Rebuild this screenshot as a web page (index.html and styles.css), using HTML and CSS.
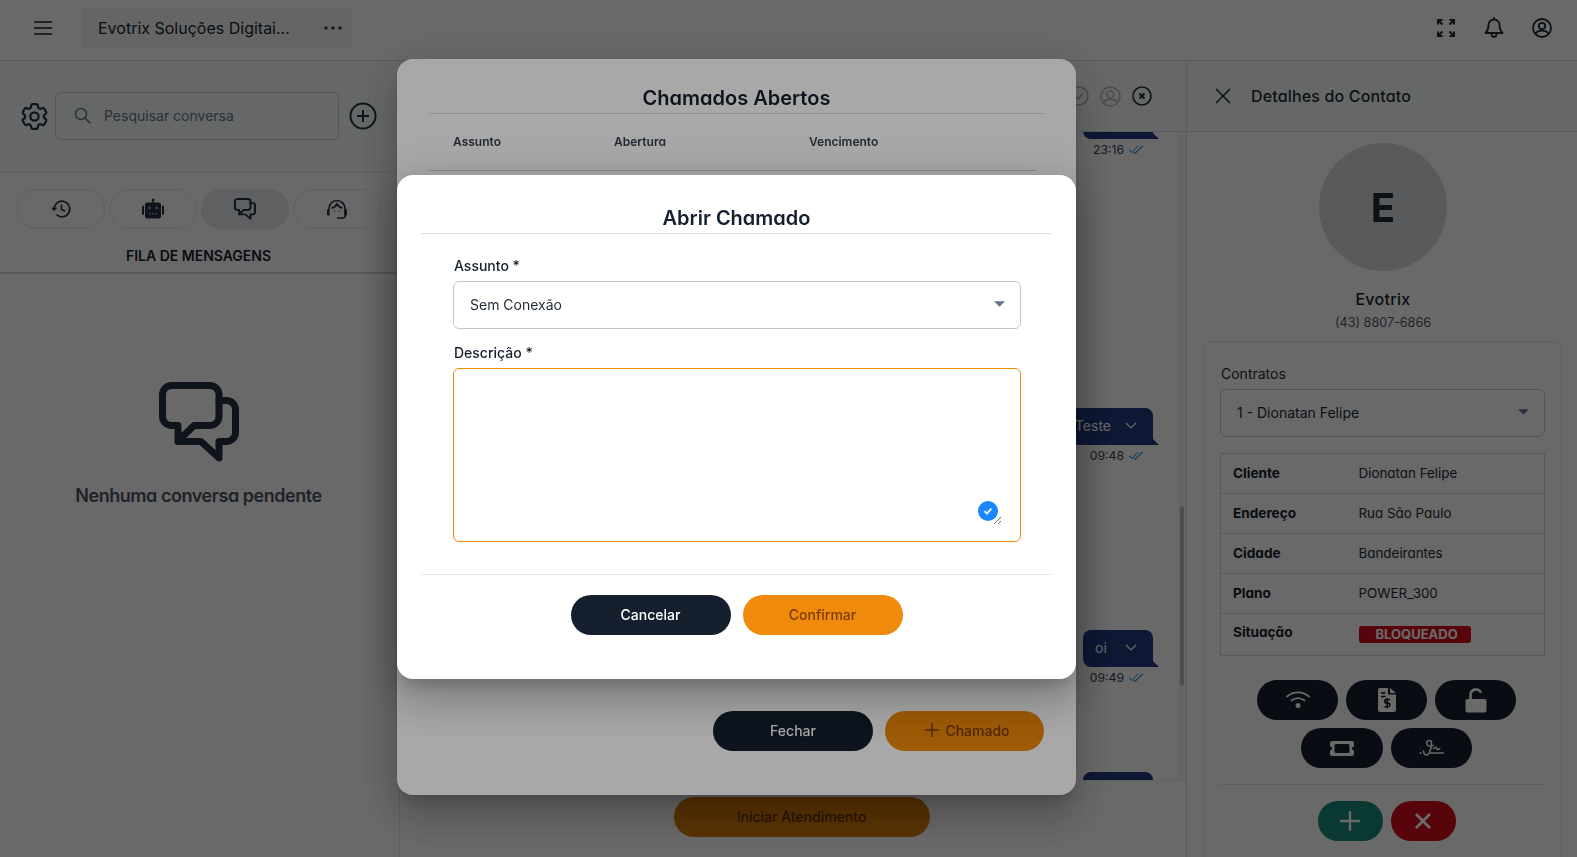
FILE: index.html
```html
<!DOCTYPE html>
<html lang="pt-BR">
<head>
    <meta charset="UTF-8">
    <title>Evotrix - Atendimento</title>
    <link rel="stylesheet" href="styles.css">
</head>
<body>

<svg class="defs" width="0" height="0">
    <symbol id="chats" viewBox="0 0 80 80">
        <path d="M12.5 3.5H51a9 9 0 0 1 9 9v22a9 9 0 0 1-9 9H35L19 59V43.5h-6.500a9 9 0 0 1-9-9v-22a9 9 0 0 1 9-9Z" fill="none" stroke="currentColor" stroke-width="7" stroke-linejoin="round"/>
        <path d="M60 18.500h7.500a9 9 0 0 1 9 9V50.500a9 9 0 0 1-9 9H60V76L42 59.500H19" fill="none" stroke="currentColor" stroke-width="7" stroke-linejoin="round" stroke-linecap="round"/>
    </symbol>
    <symbol id="caret" viewBox="0 0 12 6">
        <path d="M0 0h12L6 6Z" fill="currentColor"/>
    </symbol>
    <symbol id="ticks" viewBox="0 0 14 9">
        <path d="M0.500 5l2.500 2.500L9 1M5 7.500L6 8.500 13.500 1" fill="none" stroke="currentColor" stroke-width="1.100"/>
    </symbol>
</svg>

<div class="app">
    <header class="topbar">
        <button class="icon-btn menu-btn">
            <svg width="18" height="14" viewBox="0 0 18 14"><path d="M0 1h18M0 7h18M0 13h18" stroke="currentColor" stroke-width="1.600"/></svg>
        </button>
        <div class="company">
            <span class="company-name">Evotrix Soluções Digitai...</span>
            <span class="company-more">
                <svg width="18" height="4" viewBox="0 0 18 4"><circle cx="2" cy="2" r="1.700"/><circle cx="9" cy="2" r="1.700"/><circle cx="16" cy="2" r="1.700"/></svg>
            </span>
        </div>
        <div class="topbar-actions">
            <svg width="20" height="20" viewBox="0 0 20 20" fill="none" stroke="currentColor" stroke-width="2"><path d="M2 6.500V2h4.500M2 2l4.500 4.500M13.500 2H18v4.500M18 2l-4.500 4.500M2 13.500V18h4.500M2 18l4.500-4.500M13.500 18H18v-4.500M18 18l-4.500-4.500"/></svg>
            <svg width="20" height="22" viewBox="0 0 20 22" fill="none" stroke="currentColor" stroke-width="1.800" stroke-linejoin="round" stroke-linecap="round"><path d="M10 2.500a5.500 5.500 0 0 0-5.500 5.500c0 4-1 6-3 8h17c-2-2-3-4-3-8A5.500 5.500 0 0 0 10 2.500ZM7.500 16.500c0 2 1 3.500 2.500 3.500s2.500-1.500 2.500-3.500M10 1v1.500"/></svg>
            <svg width="20" height="20" viewBox="0 0 20 20" fill="none" stroke="currentColor" stroke-width="1.800"><circle cx="10" cy="10" r="9"/><circle cx="10" cy="8" r="3.200"/><path d="M3.500 15.500c1.500-2 4-2.800 6.500-2.800s5 .8 6.500 2.800"/></svg>
        </div>
    </header>

    <div class="main">
        <aside class="sidebar">
            <div class="search-row">
                <svg class="gear" width="33" height="33" viewBox="0 0 24 24" fill="none" stroke="currentColor" stroke-width="1.600" stroke-linejoin="round"><path d="M9.594 3.940c.09-.542.56-.94 1.110-.94h2.593c.55 0 1.020.398 1.110.94l.213 1.281c.063.374.313.686.645.870.074.040.147.083.22.127.325.196.72.257 1.075.124l1.217-.456a1.125 1.125 0 0 1 1.370.49l1.296 2.247a1.125 1.125 0 0 1-.26 1.431l-1.003.827c-.293.241-.438.613-.43.992a7.723 7.723 0 0 1 0 .255c-.008.378.137.75.43.991l1.004.827c.424.35.534.955.26 1.430l-1.298 2.247a1.125 1.125 0 0 1-1.369.491l-1.217-.456c-.355-.133-.75-.072-1.076.124a6.470 6.470 0 0 1-.22.128c-.331.183-.581.495-.644.869l-.213 1.281c-.09.543-.56.94-1.110.94h-2.594c-.55 0-1.019-.398-1.110-.94l-.213-1.281c-.062-.374-.312-.686-.644-.87a6.520 6.520 0 0 1-.22-.127c-.325-.196-.72-.257-1.076-.124l-1.217.456a1.125 1.125 0 0 1-1.369-.49l-1.297-2.247a1.125 1.125 0 0 1 .26-1.431l1.004-.827c.292-.24.437-.613.43-.991a6.932 6.932 0 0 1 0-.255c.007-.38-.138-.751-.43-.992l-1.004-.827a1.125 1.125 0 0 1-.26-1.430l1.297-2.247a1.125 1.125 0 0 1 1.370-.491l1.216.456c.356.133.751.072 1.076-.124.072-.044.146-.086.22-.128.332-.183.582-.495.644-.869l.214-1.280Z"/><circle cx="12" cy="12" r="3"/></svg>
                <div class="search-box">
                    <svg width="17" height="17" viewBox="0 0 17 17" fill="none" stroke="currentColor" stroke-width="1.500"><circle cx="7" cy="7" r="5.500"/><path d="M11 11l5.500 5.500"/></svg>
                    <span>Pesquisar conversa</span>
                </div>
                <svg width="28" height="28" viewBox="0 0 28 28" fill="none" stroke="currentColor" stroke-width="2"><circle cx="14" cy="14" r="12.500"/><path d="M14 8v12M8 14h12"/></svg>
            </div>
            <div class="tabs">
                <div class="tab">
                    <svg width="22" height="22" viewBox="0 0 24 24" fill="none" stroke="currentColor" stroke-width="1.800"><path d="M4.500 12a8.500 8.500 0 1 1 2.500 6M12.500 7v5.500l4 2"/><path d="M1 10.500h7L4.500 14.500Z" fill="currentColor" stroke="none"/></svg>
                </div>
                <div class="tab">
                    <svg width="24" height="24" viewBox="0 0 24 24" fill="currentColor"><circle cx="12" cy="3" r="1.500"/><path d="M11.300 3h1.400v3h-1.400ZM6.500 5.500h11a2.500 2.500 0 0 1 2.500 2.500v11a2.500 2.500 0 0 1-2.500 2.500h-11A2.500 2.500 0 0 1 4 19V8a2.500 2.500 0 0 1 2.500-2.500ZM1 10a1.500 1.500 0 0 1 2-1.400V18A1.500 1.500 0 0 1 1 16.500ZM21 8.600A1.500 1.500 0 0 1 23 10v6.500A1.500 1.500 0 0 1 21 18Z"/><g fill="#fff" fill-opacity=".55"><circle cx="8.500" cy="11" r="1.400"/><circle cx="15.500" cy="11" r="1.400"/><path d="M8 16h1.500v1.400H8ZM11.250 16h1.500v1.400h-1.500ZM14.500 16H16v1.400h-1.500Z"/></g></svg>
                </div>
                <div class="tab tab--active">
                    <svg width="22" height="22"><use href="#chats"/></svg>
                </div>
                <div class="tab">
                    <svg width="22" height="22" viewBox="0 0 22 22" fill="none" stroke="currentColor" stroke-width="1.600"><path d="M3 12v-1.500a8 8 0 0 1 16 0V18a2 2 0 0 1-2 2h-6"/><path d="M5.500 10c2.500-.3 4.200-1.700 5.500-4 1.300 2.300 3 3.700 5.500 4"/><path d="M2.300 12.500v4M19.700 12.500v4" stroke-width="2.600" stroke-linecap="round"/><path d="M8.500 12.500v1M13.500 12.500v1" stroke-width="1.500"/></svg>
                </div>
            </div>
            <h2 class="queue-title">FILA DE MENSAGENS</h2>
            <div class="empty">
                <svg width="80" height="80"><use href="#chats"/></svg>
                <p>Nenhuma conversa pendente</p>
            </div>
        </aside>

        <section class="chat">
            <div class="chat-head">
                <svg class="muted" width="20" height="20" viewBox="0 0 20 20" fill="none" stroke="currentColor" stroke-width="1.500"><circle cx="10" cy="10" r="9"/><path d="M6 10l3 3 5-6"/></svg>
                <svg class="muted" width="21" height="21" viewBox="0 0 20 20" fill="none" stroke="currentColor" stroke-width="1.500"><circle cx="10" cy="10" r="9"/><circle cx="10" cy="8" r="3.200"/><path d="M3.500 15.500c1.500-2 4-2.800 6.500-2.800s5 .8 6.500 2.800"/></svg>
                <svg width="20" height="20" viewBox="0 0 20 20" fill="none" stroke="currentColor" stroke-width="1.600"><circle cx="10" cy="10" r="9"/><path d="M7.500 7.500l5 5M12.500 7.500l-5 5" stroke-width="1.800"/></svg>
            </div>
            <div class="messages">
                <div class="message message--first">
                    <div class="bubble"></div>
                    <div class="stamp">23:16 <svg width="14" height="9"><use href="#ticks"/></svg></div>
                </div>
                <div class="message message--second">
                    <div class="bubble"><span>Teste</span><svg width="12" height="7" viewBox="0 0 12 7" fill="none" stroke="currentColor" stroke-width="1.200"><path d="M1 1l5 5 5-5"/></svg></div>
                    <div class="stamp">09:48 <svg width="14" height="9"><use href="#ticks"/></svg></div>
                </div>
                <div class="message message--third">
                    <div class="bubble"><span>oi</span><svg width="12" height="7" viewBox="0 0 12 7" fill="none" stroke="currentColor" stroke-width="1.200"><path d="M1 1l5 5 5-5"/></svg></div>
                    <div class="stamp">09:49 <svg width="14" height="9"><use href="#ticks"/></svg></div>
                </div>
                <div class="message message--fourth">
                    <div class="bubble"></div>
                </div>
                <div class="scroll-track"><div class="scroll-thumb"></div></div>
            </div>
            <div class="chat-foot">
                <button class="pill pill--orange pill--start">Iniciar Atendimento</button>
            </div>
        </section>

        <aside class="details">
            <div class="details-head">
                <svg width="16" height="16" viewBox="0 0 16 16" fill="none" stroke="currentColor" stroke-width="1.500"><path d="M1 1l14 14M15 1L1 15"/></svg>
                <span>Detalhes do Contato</span>
            </div>
            <div class="profile">
                <div class="avatar">E</div>
                <div class="profile-name">Evotrix</div>
                <div class="profile-phone">(43) 8807-6866</div>
            </div>
            <div class="card">
                <div class="card-label">Contratos</div>
                <div class="select select--card">
                    <span>1 - Dionatan Felipe</span>
                    <svg width="11" height="6"><use href="#caret"/></svg>
                </div>
                <table class="info">
                    <tr><th>Cliente</th><td>Dionatan Felipe</td></tr>
                    <tr><th>Endereço</th><td>Rua São Paulo</td></tr>
                    <tr><th>Cidade</th><td>Bandeirantes</td></tr>
                    <tr><th>Plano</th><td>POWER_300</td></tr>
                    <tr><th>Situação</th><td><span class="badge">BLOQUEADO</span></td></tr>
                </table>
                <div class="actions">
                    <button class="round-btn">
                        <svg width="26" height="22" viewBox="0 0 26 22" fill="none" stroke="currentColor" stroke-width="1.700" stroke-linecap="round"><path d="M2 7.500c6.500-5.500 15.500-5.500 22 0M6.500 11.500c4-3 9-3 13 0"/><circle cx="13" cy="16.500" r="2.500" fill="currentColor" stroke="none"/></svg>
                    </button>
                    <button class="round-btn">
                        <svg width="20" height="26" viewBox="0 0 20 26" fill="currentColor"><path d="M3 1h8v6.500h8V22.500a2.500 2.500 0 0 1-2.500 2.500h-13.500A2.500 2.500 0 0 1 1 22.500V3a2 2 0 0 1 2-2ZM13 1l6 5h-6Z"/><path d="M4 6h4.500M4 9.500h4.500M13 12.500H9.500a1.800 1.800 0 0 0 0 3.600h1.500a1.800 1.800 0 0 1 0 3.600H7.500M10.200 11v10.200" fill="none" stroke="#0a0e15" stroke-width="1.500"/></svg>
                    </button>
                    <button class="round-btn">
                        <svg width="22" height="25" viewBox="0 0 22 25" fill="currentColor"><path d="M2.500 11h17a2 2 0 0 1 2 2v9.500a2 2 0 0 1-2 2h-17a2 2 0 0 1-2-2V13a2 2 0 0 1 2-2Z"/><path d="M5.500 11V7a5.500 5.500 0 0 1 10.500-2.300" fill="none" stroke="currentColor" stroke-width="2.600"/></svg>
                    </button>
                    <button class="round-btn round-btn--wide">
                        <svg width="24" height="15" viewBox="0 0 24 15" fill="currentColor" fill-rule="evenodd"><path d="M2 0h20a2 2 0 0 1 2 2v3.500a2 2 0 0 0 0 4V13a2 2 0 0 1-2 2H2a2 2 0 0 1-2-2V9.500a2 2 0 0 0 0-4V2a2 2 0 0 1 2-2ZM6 3a1.500 1.500 0 0 0-1.500 1.500v6A1.500 1.500 0 0 0 6 12h12a1.500 1.500 0 0 0 1.500-1.500v-6A1.500 1.500 0 0 0 18 3Z"/></svg>
                    </button>
                    <button class="round-btn">
                        <svg width="25" height="17" viewBox="0 0 25 17" fill="none" stroke="currentColor" stroke-width="1.500" stroke-linecap="round"><path d="M1 13h1M4.500 11c0 3.500 3 5 5 3S12.500 5 12.500 3s-1-2.800-3-2.300S7 3.800 8.500 5.300s4.500.7 5.700 0M14.500 8.500c1.500-1.700 3-1.700 3 0s1.300 1 3.300.3M11.500 13H24.500"/></svg>
                    </button>
                </div>
                <div class="card-rule"></div>
                <div class="actions">
                    <button class="round-btn round-btn--small round-btn--green">
                        <svg width="20" height="20" viewBox="0 0 20 20" stroke="currentColor" stroke-width="2.400" stroke-linecap="round"><path d="M10 1v18M1 10h18"/></svg>
                    </button>
                    <button class="round-btn round-btn--small round-btn--red">
                        <svg width="16" height="16" viewBox="0 0 16 16" stroke="currentColor" stroke-width="2.800"><path d="M1 1l14 14M15 1L1 15"/></svg>
                    </button>
                </div>
            </div>
        </aside>
    </div>
</div>

<div class="overlay overlay--first">
    <div class="modal modal--list">
        <h2 class="modal-title">Chamados Abertos</h2>
        <div class="list-head">
            <span class="col-subject">Assunto</span>
            <span class="col-open">Abertura</span>
            <span>Vencimento</span>
        </div>
        <div class="list-foot">
            <button class="pill pill--dark">Fechar</button>
            <button class="pill pill--orange pill--add">
                <svg width="14" height="14" viewBox="0 0 14 14" stroke="currentColor" stroke-width="1.400"><path d="M7 0v14M0 7h14"/></svg>
                Chamado
            </button>
        </div>
    </div>
</div>

<div class="overlay">
    <form class="modal modal--form">
        <h2 class="modal-title">Abrir Chamado</h2>
        <div class="form-body">
            <label class="field-label">Assunto *</label>
            <div class="select">
                <span>Sem Conexão</span>
                <svg width="11" height="6"><use href="#caret"/></svg>
            </div>
            <label class="field-label field-label--next">Descrição *</label>
            <div class="textarea-wrap">
                <textarea class="textarea"></textarea>
                <span class="check-badge">
                    <svg width="10" height="10" viewBox="0 0 10 10" fill="none" stroke="#fff" stroke-width="1.800"><path d="M1.500 5.200l2.500 2.300 4.500-5"/></svg>
                </span>
            </div>
        </div>
        <div class="form-foot">
            <button type="button" class="pill pill--dark">Cancelar</button>
            <button type="button" class="pill pill--orange">Confirmar</button>
        </div>
    </form>
</div>

</body>
</html>
```

FILE: styles.css
```css
* {
    box-sizing: border-box;
}

html, body {
    height: 100%;
}

body {
    margin: 0;
    background: #fdfdfd;
    color: #161f2d;
    font-family: Inter, "Noto Sans", sans-serif;
    font-size: 14px;
    overflow: hidden;
}

h2, p {
    margin: 0;
}

button {
    font-family: inherit;
    border: none;
    padding: 0;
    background: none;
    color: inherit;
}

svg {
    display: block;
    flex-shrink: 0;
}

.defs {
    position: absolute;
}

.app {
    height: 100vh;
    display: flex;
    flex-direction: column;
}

/* top bar */
.topbar {
    height: 61px;
    flex-shrink: 0;
    display: flex;
    align-items: center;
    padding: 0 25px 4px 34px;
    border-bottom: 1px solid #d1d5db;
}

.menu-btn {
    margin-right: 30px;
}

.company {
    display: flex;
    height: 40px;
    background: #f3f4f6;
}

.company-name {
    width: 230px;
    padding-left: 16px;
    font-size: 16px;
    line-height: 40px;
    border-right: 1px solid #e9eaec;
}

.company-more {
    width: 41px;
    display: flex;
    align-items: center;
    justify-content: center;
    fill: #374151;
}

.topbar-actions {
    margin-left: auto;
    display: flex;
    align-items: center;
    gap: 28px;
    color: #1f2937;
}

.main {
    flex: 1;
    min-height: 0;
    display: flex;
}

/* left column */
.sidebar {
    width: 400px;
    flex-shrink: 0;
    border-right: 1px solid #e5e7eb;
    display: flex;
    flex-direction: column;
}

.search-row {
    height: 112px;
    padding: 0 22px 1px 18px;
    display: flex;
    align-items: center;
    gap: 4px;
    background: #f6fbf9;
    border-bottom: 1px solid #e0e2e6;
    color: #243044;
}

.search-box {
    width: 284px;
    height: 48px;
    margin: 0 6px 0 0;
    padding: 0 0 2px 18px;
    display: flex;
    align-items: center;
    gap: 13px;
    border: 1px solid #c2c8d2;
    border-radius: 6px;
    color: #64748b;
}

.tabs {
    display: flex;
    gap: 4px;
    padding: 16px 0 0 17px;
}

.tab {
    width: 88px;
    height: 40px;
    border: 1px solid #e2e4e8;
    border-radius: 20px;
    display: flex;
    align-items: center;
    justify-content: center;
    color: #243044;
}

.tab--active {
    background: #e5e7eb;
    border-color: #e5e7eb;
}

.queue-title {
    height: 45px;
    padding-right: 2px;
    font-size: 14px;
    font-weight: 600;
    line-height: 54px;
    text-align: center;
    border-bottom: 2px solid #cfd3da;
}

.empty {
    padding: 108px 2px 0 0;
    display: flex;
    flex-direction: column;
    align-items: center;
    gap: 23px;
    color: #243044;
}

.empty p {
    font-size: 18px;
    font-weight: 600;
    letter-spacing: -0.025em;
    color: #4b5563;
    font-feature-settings: "cv11";
}

/* chat */
.chat {
    flex: 1;
    min-width: 0;
    display: flex;
    flex-direction: column;
}

.chat-head {
    height: 71px;
    flex-shrink: 0;
    padding-right: 34px;
    display: flex;
    align-items: center;
    justify-content: flex-end;
    gap: 11px;
    background: #f6fbf9;
    border-bottom: 1px solid #d9dce1;
    color: #1f2937;
}

.muted {
    color: #b0b5bc;
}

.messages {
    flex: 1;
    min-height: 0;
    position: relative;
    overflow: hidden;
    padding-right: 33px;
    display: flex;
    flex-direction: column;
    align-items: flex-end;
}

.message {
    flex-shrink: 0;
    display: flex;
    flex-direction: column;
    align-items: flex-end;
}

.message--first {
    margin-top: -30px;
}

.message--second {
    margin-top: 247px;
}

.message--third {
    margin-top: 163px;
}

.message--fourth {
    margin-top: 83px;
}

.bubble {
    position: relative;
    min-width: 70px;
    height: 37px;
    padding: 0 16px 2px 12px;
    display: flex;
    align-items: center;
    justify-content: space-between;
    gap: 14px;
    border-radius: 8px 8px 0 8px;
    background: #213a80;
    color: #fff;
    font-size: 14px;
}

.bubble::after {
    content: "";
    position: absolute;
    right: -6px;
    bottom: 0;
    border-left: 6px solid #213a80;
    border-top: 6px solid transparent;
}

.stamp {
    width: 70px;
    height: 20px;
    margin-bottom: 2px;
    padding-right: 10px;
    display: flex;
    align-items: center;
    justify-content: flex-end;
    gap: 5px;
    font-size: 12.2px;
    color: #374151;
}

.stamp svg {
    color: #2b8fd8;
}

.scroll-track {
    position: absolute;
    top: 0;
    right: 0;
    bottom: 0;
    width: 8px;
    background: #f2f3f5;
}

.scroll-thumb {
    width: 4px;
    height: 180px;
    margin: 374px 0 0 2px;
    border-radius: 2px;
    background: #b5b8bd;
}

.chat-foot {
    height: 77px;
    flex-shrink: 0;
    padding: 16px 0 0 17px;
    display: flex;
    justify-content: center;
    border-top: 1px solid #e5e7eb;
}

/* contact details */
.details {
    width: 391px;
    flex-shrink: 0;
    border-left: 1px solid #d9dce1;
    overflow: hidden;
}

.details-head {
    height: 71px;
    padding-left: 28px;
    display: flex;
    align-items: center;
    gap: 20px;
    background: #f6fbf9;
    border-bottom: 1px solid #d9dce1;
    font-size: 16px;
    font-weight: 500;
    letter-spacing: 0.01em;
    font-feature-settings: "cv11";
    color: #1f2937;
}

.profile {
    padding: 11px 0 0 2px;
    display: flex;
    flex-direction: column;
    align-items: center;
}

.avatar {
    width: 128px;
    height: 128px;
    border-radius: 50%;
    background: #d6d9de;
    display: flex;
    align-items: center;
    justify-content: center;
    font-size: 40px;
    font-weight: 700;
    color: #1f2937;
}

.profile-name {
    margin-top: 18px;
    font-size: 16px;
    font-weight: 500;
    line-height: 20px;
    letter-spacing: 0.02em;
}

.profile-phone {
    margin-top: 5px;
    font-size: 12.6px;
    line-height: 18px;
    color: #4b5563;
}

.card {
    width: 359px;
    margin: 9px 0 0 16px;
    padding: 22px 16px 16px;
    height: 540px;
    border: 1px solid #e0e2e6;
    border-radius: 8px;
}

.card-label {
    font-size: 14px;
    line-height: 20px;
    margin: 0 0 5px 1px;
    color: #1f2937;
}

.select {
    height: 48px;
    padding: 0 15px 2px 16px;
    display: flex;
    align-items: center;
    justify-content: space-between;
    border: 1px solid #c2c8d2;
    border-radius: 6px;
    color: #64748b;
}

.select span {
    font-size: 14px;
    color: #1f2937;
}

.select--card {
    margin-bottom: 16px;
}

.info {
    width: 100%;
    border-collapse: collapse;
    border: 1px solid #d1d5db;
    font-feature-settings: "cv11";
}

.info tr {
    height: 40px;
}

.info tr:last-child {
    height: 42px;
}

.info th,
.info td {
    padding: 0 12px 2px;
    text-align: left;
    border-top: 1px solid #d1d5db;
}

.info th {
    width: 126px;
    font-size: 13.6px;
    font-weight: 700;
    color: #161f2d;
}

.info td {
    font-size: 13.4px;
    color: #1f2937;
}

.info tr:last-child th {
    padding-bottom: 5px;
}

.info tr:last-child td {
    padding-bottom: 0;
}

.badge {
    display: block;
    width: 112px;
    height: 17px;
    padding-left: 17px;
    border-radius: 3px;
    background: #d10e1c;
    color: #fff;
    font-size: 13px;
    font-weight: 700;
    line-height: 16px;
    font-feature-settings: normal;
}

.actions {
    margin-top: 24px;
    padding-left: 8px;
    display: flex;
    flex-wrap: wrap;
    justify-content: center;
    gap: 8px;
}

.round-btn {
    width: 81px;
    height: 40px;
    border-radius: 20px;
    background: #17202f;
    color: #fff;
    display: flex;
    align-items: center;
    justify-content: center;
}

.round-btn--wide {
    width: 82px;
}

.round-btn--small {
    width: 65px;
}

.round-btn--green {
    background: #198778;
}

.round-btn--red {
    background: #d10e1c;
}

.card-rule {
    height: 1px;
    margin-top: 16px;
    background: #e0e2e6;
}

.card-rule + .actions {
    margin-top: 16px;
}

/* modals */
.overlay {
    position: fixed;
    inset: 0;
    background: rgba(0, 0, 0, 0.34);
}

.overlay--first {
    background: rgba(0, 0, 0, 0.37);
}

.modal {
    position: absolute;
    left: 397px;
    width: 679px;
    display: flex;
    flex-direction: column;
    background: #fff;
    border-radius: 16px;
    box-shadow: 0 11px 15px -7px rgba(0, 0, 0, 0.2), 0 24px 38px 3px rgba(0, 0, 0, 0.14), 0 9px 46px 8px rgba(0, 0, 0, 0.12);
}

.modal--list {
    top: 59px;
    height: 736px;
    padding: 26px 32px 44px;
}

.modal--form {
    top: 175px;
    height: 504px;
    padding: 30px 24px 0;
}

.modal-title {
    font-size: 20px;
    font-weight: 600;
    line-height: 26px;
    padding-bottom: 2px;
    text-align: center;
    font-feature-settings: "cv11";
    border-bottom: 1px solid #d9dce1;
}

.list-head {
    margin-right: 8px;
    height: 57px;
    padding: 0 0 2px 24px;
    display: flex;
    align-items: center;
    border-bottom: 1px solid #cfd3da;
    font-size: 12px;
    font-weight: 600;
    font-feature-settings: "cv11";
    color: #374151;
}

.col-subject {
    width: 161px;
}

.col-open {
    width: 195px;
}

.list-foot {
    margin-top: auto;
    display: flex;
    justify-content: flex-end;
    gap: 12px;
}

.form-body {
    padding: 22px 31px 32px 32px;
    border-bottom: 1px solid #e2e8f0;
}

.field-label {
    display: block;
    margin: 0 0 5px 1px;
    font-size: 14px;
    font-weight: 500;
    line-height: 20px;
}

.field-label--next {
    margin-top: 14px;
}

.textarea-wrap {
    position: relative;
    height: 174px;
    padding: 18px 18px 16px;
    border: 1px solid #f08a0c;
    border-radius: 6px;
}

.textarea {
    display: block;
    width: 100%;
    height: 100%;
    border: none;
    outline: none;
}

.check-badge {
    position: absolute;
    right: 22px;
    bottom: 20px;
    width: 20px;
    height: 20px;
    border-radius: 50%;
    background: #1a86ff;
    display: flex;
    align-items: center;
    justify-content: center;
}

.form-foot {
    padding-top: 20px;
    display: flex;
    justify-content: center;
    gap: 12px;
}

.pill {
    width: 160px;
    height: 40px;
    padding-bottom: 2px;
    border-radius: 20px;
    display: flex;
    align-items: center;
    justify-content: center;
    gap: 6px;
    font-size: 14px;
    font-weight: 500;
}

.pill--dark {
    background: #161f2d;
    color: #fff;
}

.pill--orange {
    background: #f08a0c;
    color: #7a3c08;
}

.pill--add {
    width: 159px;
    padding-left: 6px;
}

.pill--start {
    width: 256px;
    background: #d67a08;
    color: #5e2e06;
}
```
